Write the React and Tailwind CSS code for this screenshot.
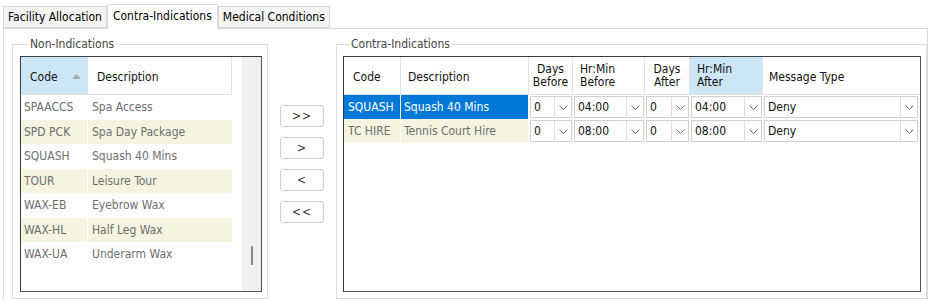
import React from "react";

const font = "font-['Tahoma','DejaVu_Sans_Condensed','DejaVu_Sans',sans-serif]";

const available = [
  ["SPAACCS", "Spa Access"],
  ["SPD PCK", "Spa Day Package"],
  ["SQUASH", "Squash 40 Mins"],
  ["TOUR", "Leisure Tour"],
  ["WAX-EB", "Eyebrow Wax"],
  ["WAX-HL", "Half Leg Wax"],
  ["WAX-UA", "Underarm Wax"],
];

const contra = [
  { code: "SQUASH", desc: "Squash 40 Mins", db: "0", hb: "04:00", da: "0", ha: "04:00", msg: "Deny", selected: true },
  { code: "TC HIRE", desc: "Tennis Court Hire", db: "0", hb: "08:00", da: "0", ha: "08:00", msg: "Deny" },
];

function Chevron() {
  return (
    <svg width="9" height="5" viewBox="0 0 9 5" fill="none">
      <path d="M0.5 0.5L4.5 4.5L8.5 0.5" stroke="#6b6b6b" strokeWidth="1" />
    </svg>
  );
}

function Combo({ value }) {
  return (
    <div className="flex h-[22px] mx-[1px] mt-[1px] border border-[#d0d0d0] bg-white">
      <span className="flex-1 pl-[3px] leading-[20px] text-[#111]">{value}</span>
      <div className="w-[17px] border-l border-[#dedede] flex items-center justify-center">
        <Chevron />
      </div>
    </div>
  );
}

function Tab({ label, active }) {
  if (active) {
    return (
      <div className="h-[25px] px-[5px] bg-white border border-b-0 border-[#d9d9d9] -mb-[1px] relative z-10 leading-[22px] text-black">
        {label}
      </div>
    );
  }
  return (
    <div className="h-[22px] px-[4px] bg-[#f4f4f4] border border-[#d9d9d9] leading-[20px] text-black">
      {label}
    </div>
  );
}

function NavButton({ label }) {
  return (
    <button className="w-[44px] h-[22px] bg-white border border-[#cfcfcf] rounded-[3px] text-[#333] text-[12px] leading-none tracking-[1px]">
      {label}
    </button>
  );
}

export default function App() {
  return (
    <div className={`w-[930px] h-[300px] bg-white overflow-hidden text-[12px] ${font}`}>
      {/* Tabs */}
      <div className="flex items-end h-[28px] pl-[3px]">
        <Tab label="Facility Allocation" />
        <Tab label="Contra-Indications" active />
        <Tab label="Medical Conditions" />
      </div>

      {/* Tab page */}
      <div className="w-[925px] ml-[3px] h-[280px] border border-[#d9d9d9] bg-white flex pl-[8px] pt-[8px]">
        {/* Non-Indications */}
        <fieldset className="w-[256px] h-[262px] border border-[#dcdcdc] pl-[7px] pr-[5px] pb-[6px] flex flex-col">
          <legend className="ml-[8px] px-[2px] text-[#444] leading-[14px]">Non-Indications</legend>
          <div className="flex-1 mt-[5px] border border-[#3a3a3a] border-r-[#555] border-b-[#555] flex bg-white">
            <div className="w-[211px] flex flex-col">
              <div className="flex h-[38px] border-b border-[#e3e3e3]">
                <div className="w-[67px] bg-[#cce6f7] flex items-center pl-[9px] pt-[2px] text-[#111]">
                  <span className="flex-1">Code</span>
                  <svg width="9" height="5" viewBox="0 0 9 5" className="mr-[7px]">
                    <path d="M0 5L4.5 0L9 5Z" fill="#a9a9a9" />
                  </svg>
                </div>
                <div className="flex-1 flex items-center pl-[9px] pt-[2px] border-r border-[#e3e3e3] text-[#111]">Description</div>
              </div>
              {available.map(([code, desc], i) => (
                <div key={code} className="flex h-[24.5px] items-center text-[#6e6e6e]">
                  <div className={`w-[66px] h-full pl-[3px] flex items-center mr-[1px] ${i % 2 ? "bg-[#f4f4e0]" : ""}`}>{code}</div>
                  <div className={`flex-1 h-full pl-[4px] flex items-center ${i % 2 ? "bg-[#f4f4e0]" : ""}`}>{desc}</div>
                </div>
              ))}
            </div>
            <div className="w-[10px]" />
            <div className="flex-1 bg-[#f0f0f0] flex flex-col items-center">
              <div className="mt-[189px] w-[2px] h-[19px] bg-[#8a8a8a]" />
            </div>
          </div>
        </fieldset>

        {/* Move buttons */}
        <div className="w-[68px] flex flex-col items-center pt-[68px] gap-[10px]">
          <NavButton label=">>" />
          <NavButton label=">" />
          <NavButton label="<" />
          <NavButton label="<<" />
        </div>

        {/* Contra-Indications */}
        <fieldset className="w-[591px] h-[262px] border border-[#dcdcdc] pl-[6px] pr-[5px] pb-[6px] flex flex-col">
          <legend className="ml-[7px] px-[1px] text-[#444] leading-[14px]">Contra-Indications</legend>
          <div className="flex-1 mt-[5px] border border-[#3a3a3a] border-r-[#555] border-b-[#555] bg-white">
            <div className="grid grid-cols-[57px_128px_44px_72px_45px_73px_156px] h-[38px] border-b border-[#e3e3e3] text-[#111]">
              <div className="flex items-center pl-[9px] pt-[2px] border-r border-[#e3e3e3]">Code</div>
              <div className="flex items-center pl-[7px] pt-[2px] border-r border-[#e3e3e3]">Description</div>
              <div className="flex flex-col justify-center items-center leading-[13px] border-r border-[#e3e3e3]">
                <span>Days</span>
                <span>Before</span>
              </div>
              <div className="flex flex-col justify-center pl-[7px] leading-[13px] border-r border-[#e3e3e3]">
                <span>Hr:Min</span>
                <span>Before</span>
              </div>
              <div className="flex flex-col justify-center items-center leading-[13px] border-r border-[#e3e3e3]">
                <span>Days</span>
                <span>After</span>
              </div>
              <div className="flex flex-col justify-center pl-[7px] leading-[13px] bg-[#cce6f7] border-r border-[#e3e3e3]">
                <span>Hr:Min</span>
                <span>After</span>
              </div>
              <div className="flex items-center pl-[6px] pt-[2px]">Message Type</div>
            </div>
            {contra.map((r) => (
              <div key={r.code} className="grid grid-cols-[57px_128px_44px_72px_45px_73px_156px] h-[24px]">
                <div className={`flex items-center pl-[4px] border-r border-white ${r.selected ? "bg-[#0078d7] text-white" : "bg-[#f4f4e0] text-[#6e6e6e]"}`}>{r.code}</div>
                <div className={`flex items-center pl-[3px] mr-[1px] ${r.selected ? "bg-[#0078d7] text-white" : "bg-[#f4f4e0] text-[#6e6e6e]"}`}>{r.desc}</div>
                <Combo value={r.db} />
                <Combo value={r.hb} />
                <Combo value={r.da} />
                <Combo value={r.ha} />
                <Combo value={r.msg} />
              </div>
            ))}
          </div>
        </fieldset>
      </div>
    </div>
  );
}
